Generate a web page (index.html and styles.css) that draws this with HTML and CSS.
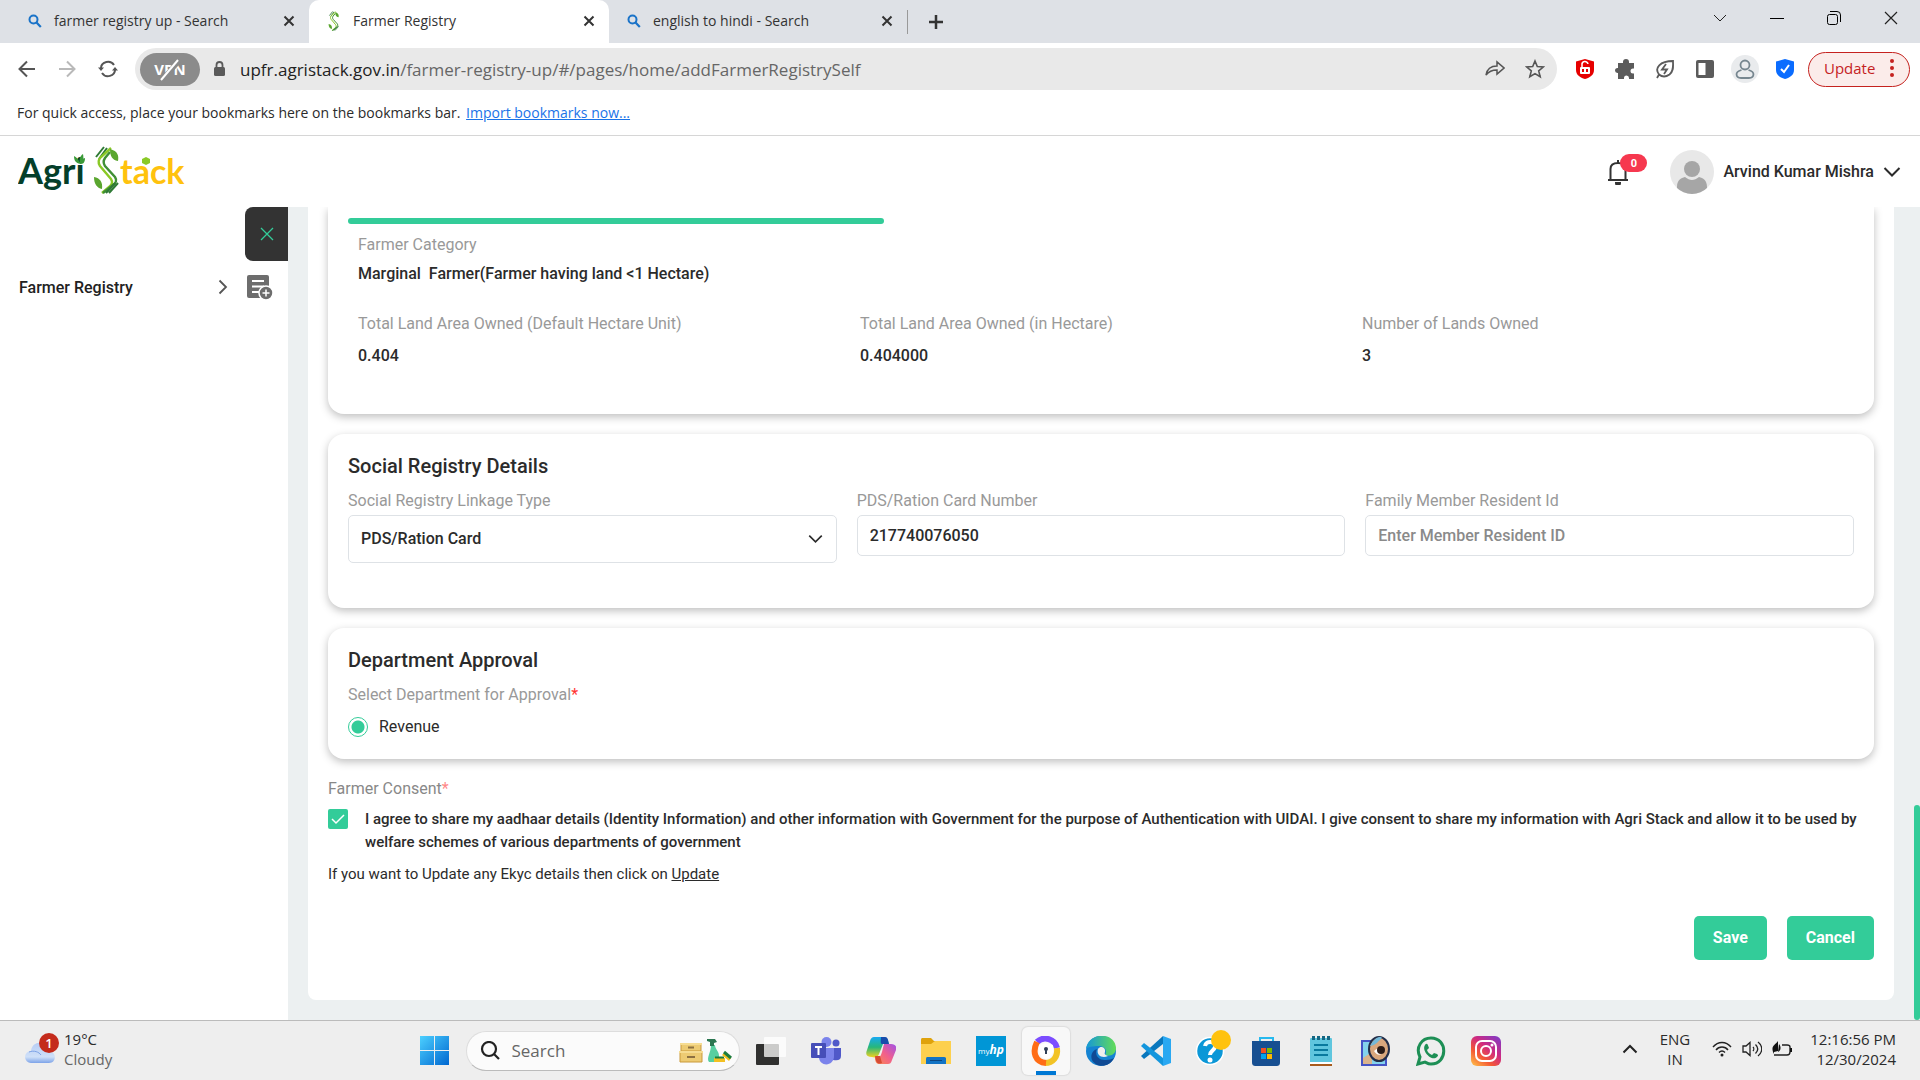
FILE: index.html
```html
<!DOCTYPE html>
<html lang="en">
<head>
<meta charset="utf-8">
<title>Farmer Registry</title>
<link rel="stylesheet" href="styles.css">
</head>
<body>
<svg class="defs" aria-hidden="true">
  <symbol id="search" viewBox="0 0 14 14"><circle cx="5.5" cy="5.5" r="4" fill="none" stroke="currentColor" stroke-width="2"/><path d="M8.5 8.5L12.8 13" stroke="currentColor" stroke-width="2.2"/></symbol>
  <symbol id="x" viewBox="0 0 12 12"><path d="M1.5 1.5l9 9M10.500 1.500l-9 9" stroke="currentColor" stroke-width="2" fill="none"/></symbol>
  <symbol id="chevron" viewBox="0 0 18 12"><path d="M1.500 2L9 9.500L16.500 2" stroke="currentColor" stroke-width="2" fill="none"/></symbol>
  <symbol id="stalk" viewBox="0 0 26 48">
    <path d="M2 11L10 1M5 13L13 2" stroke="#2f7a35" stroke-width="2" fill="none"/>
    <path d="M17 2L7 11C4 14 4 17 6 20L17 33C19 36 18 39 15 41L8 47" stroke="#8ac926" stroke-width="2.400" fill="none"/>
    <path d="M16 6L11 12C9 15 9 17 11 20L21 31C23 34 22 37 19 39L9 47" stroke="#3f8f35" stroke-width="2.400" fill="none"/>
    <path d="M16 3C24 5 25 10 24 15C18 14 16 10 16 3zM0 31C6 32 9 36 8 43C3 42 0 38 0 31z" fill="#5aa62f"/>
    <path d="M12 47L21 37M15 47L24 37" stroke="#2f7a35" stroke-width="2" fill="none"/>
  </symbol>
</svg>
<div class="screen">
  <div class="tabs">
    <div class="tab"><svg class="tab-icon blue"><use href="#search"/></svg><span class="tab-title">farmer registry up - Search</span><button class="bare" aria-label="Close tab"><svg class="s12"><use href="#x"/></svg></button></div>
    <div class="tab active"><svg class="tab-icon tall"><use href="#stalk"/></svg><span class="tab-title">Farmer Registry</span><button class="bare" aria-label="Close tab"><svg class="s12"><use href="#x"/></svg></button></div>
    <div class="tab"><svg class="tab-icon blue"><use href="#search"/></svg><span class="tab-title">english to hindi - Search</span><button class="bare" aria-label="Close tab"><svg class="s12"><use href="#x"/></svg></button></div>
    <button class="bare new-tab" aria-label="New tab"><svg width="16" height="16"><path d="M8 1v14M1 8h14" stroke="#333" stroke-width="2.500"/></svg></button>
    <div class="window-buttons">
      <button class="bare" aria-label="Search tabs"><svg width="14" height="14"><path d="M1 4l6 6 6-6" stroke="#222" fill="none"/></svg></button>
      <button class="bare" aria-label="Minimize"><svg width="14" height="14"><path d="M0 7.500h14" stroke="#000"/></svg></button>
      <button class="bare" aria-label="Restore"><svg width="14" height="14" fill="none" stroke="#000"><rect x=".5" y="3.500" width="10" height="10" rx="2"/><path d="M3 .5h7a3.500 3.500 0 0 1 3.500 3.500v7"/></svg></button>
      <button class="bare" aria-label="Close"><svg width="14" height="14"><path d="M1 1l12 12M13 1L1 13" stroke="#222" stroke-width="1.200"/></svg></button>
    </div>
  </div>
  <div class="toolbar">
    <button class="bare" aria-label="Back"><svg width="18" height="18" fill="none" stroke="#555" stroke-width="2"><path d="M17 9H2M9 1.500L1.500 9 9 16.500"/></svg></button>
    <button class="bare" aria-label="Forward"><svg width="18" height="18" fill="none" stroke="#b9b9b9" stroke-width="2"><path d="M1 9h15M9 1.500L16.500 9 9 16.500"/></svg></button>
    <button class="bare" aria-label="Reload"><svg width="20" height="18" fill="none" stroke="#555" stroke-width="2"><path d="M3 8a7 6.500 0 0 1 13-3M17 9.500a7 6.500 0 0 1-13 3.500"/><path d="M0 7.500h6L3 11zM14 10.500h6L17 7z" fill="#555" stroke="none"/></svg></button>
    <div class="omnibox">
      <button class="vpn">VPN<svg class="slash" viewBox="0 0 24 24"><path d="M4 22L21 3" stroke="#8b8b8b" stroke-width="5"/><path d="M3 22L20 2" stroke="#fff" stroke-width="2"/></svg></button>
      <svg width="12" height="16"><rect y="6" width="11" height="9" rx="1.500" fill="#5a5a5a"/><path d="M2.500 7V4a3 3 0 0 1 6 0v3" fill="none" stroke="#5a5a5a" stroke-width="1.800"/></svg>
      <span class="url"><span class="host">upfr.agristack.gov.in</span>/farmer-registry-up/#/pages/home/addFarmerRegistrySelf</span>
      <button class="bare" aria-label="Share"><svg width="20" height="18" fill="none" stroke="#555" stroke-width="1.500"><path d="M12 6V2l7 6-7 6v-4C7 10 4 11 1 15 2 9 6 6 12 6z"/></svg></button>
      <button class="bare" aria-label="Bookmark"><svg width="20" height="20" fill="none" stroke="#555" stroke-width="1.600"><path d="M10 2l2.300 5.600 6 .4-4.600 3.900 1.500 5.900L10 14.600l-5.200 3.200 1.500-5.900L1.700 8l6-.4z"/></svg></button>
    </div>
    <div class="extensions">
      <button class="bare" aria-label="Ad blocker"><svg width="20" height="20"><path d="M1 2.500L10 0l9 2.500V11c0 5-4 7.500-9 9-5-1.500-9-4-9-9z" fill="#e60000"/><rect x="5" y="8" width="10" height="7" rx="1" fill="#fff"/><path d="M7 8V6a3 3 0 0 1 6-1" stroke="#fff" stroke-width="1.500" fill="none"/><path d="M7 10h2v3H7zM11 10h2v3h-2z" fill="#e60000"/></svg></button>
      <button class="bare" aria-label="Extensions"><svg width="20" height="20"><path d="M3 4h5V3a2.800 2.800 0 0 1 6 0v1h5v5.500h-1a2.500 2.500 0 0 0 0 5h1V20h-5v-1a2.500 2.500 0 0 0-5 0v1H3v-6H2.500a2.500 2.500 0 0 1 0-5H3z" fill="#5b5b5b"/></svg></button>
      <button class="bare" aria-label="Performance"><svg width="20" height="20" fill="none" stroke="#5b5b5b" stroke-width="1.800"><path d="M2 19l2-3.500C-1 9 5 2 18 2c0 5 1 10-3.500 13.500C11 18 7 18 4 15.500"/><path d="M11 5L7 10.500h5L9 15"/></svg></button>
      <button class="bare" aria-label="Side panel"><svg width="20" height="20"><rect x="1" y="1" width="18" height="18" rx="2" fill="#5b5b5b"/><path d="M3.500 4h7v12h-7z" fill="#fff"/></svg></button>
      <button class="bare profile" aria-label="Profile"><svg width="20" height="20" fill="none" stroke="#76868f" stroke-width="1.800"><circle cx="10" cy="6" r="4.500"/><path d="M6.500 11C-1 13 1 19 6 19h8c5 0 7-6-.5-8"/></svg></button>
      <button class="bare" aria-label="Privacy shield"><svg width="20" height="20"><path d="M1 2.500L10 0l9 2.500V11c0 5-4 7.500-9 9-5-1.500-9-4-9-9z" fill="#0a6cff"/><path d="M6 10l3 3 5-7" stroke="#fff" stroke-width="2" fill="none"/></svg></button>
    </div>
    <button class="browser-update">Update<svg width="4" height="18" fill="#c5221f"><circle cx="2" cy="2" r="2"/><circle cx="2" cy="9" r="2"/><circle cx="2" cy="16" r="2"/></svg></button>
  </div>
  <div class="bookmarks">For quick access, place your bookmarks here on the bookmarks bar. <a href="#">Import bookmarks now...</a></div>

  <header class="app-header">
    <svg class="logo" width="168" height="50" role="img" aria-label="Agri Stack">
      <text class="logo-agri" x="0" y="39">Agri</text>
      <path d="M62 19C61 14 58 12 56 11c0 5 2 7 6 8zM62 19c-1-5 0-8 3-10 1 5 0 8-3 10zM62 19c1-4 3-6 5-6 0 5-2 6-5 6z" fill="#3a9a38"/>
      <svg x="76" y="1" width="26" height="48"><use href="#stalk"/></svg>
      <text class="logo-stack" x="102" y="39">tack</text>
      <path d="M124 14l4-2 4 2v4l-4 2-4-2z" fill="#8ac926"/>
    </svg>
    <button class="bare bell" aria-label="Notifications"><svg width="22" height="26" fill="none" stroke="#333" stroke-width="2"><path d="M1 21h20M3.500 21V10c0-4 3-6 7.500-6s7.500 2 7.500 6v11M11 1v3"/><path d="M8 23h6v1a3 3 0 0 1-6 0z" fill="#333" stroke="none"/></svg><span class="badge">0</span></button>
    <button class="bare user"><svg width="44" height="44"><clipPath id="round"><circle cx="22" cy="22" r="22"/></clipPath><g clip-path="url(#round)"><path d="M0 0h44v44H0z" fill="#e8e8e8"/><circle cx="22" cy="19" r="8" fill="#a6a6a6"/><path d="M7 44V37c0-7 4-9 8-10 5 4 9 4 14 0 4 1 8 3 8 10v7z" fill="#a6a6a6"/></g></svg><span>Arvind Kumar Mishra</span><svg width="18" height="12"><use href="#chevron"/></svg></button>
  </header>

  <div class="app">
    <nav class="sidebar">
      <button class="collapse" aria-label="Close menu"><svg width="14" height="14"><path d="M1 1l12 12M13 1L1 13" stroke="#3c9" stroke-width="1.300"/></svg></button>
      <a class="nav-item" href="#"><span>Farmer Registry</span><svg width="10" height="16"><path d="M1.500 1.500L8 8l-6.500 6.500" fill="none" stroke="#555" stroke-width="1.800"/></svg><svg width="26" height="26"><rect x="0" y="1" width="22" height="23" rx="2" fill="#6d6d6d"/><path d="M5 7h12M5 12.500h12M5 18h7" stroke="#fff" stroke-width="2"/><circle cx="19" cy="19" r="7" fill="#6d6d6d" stroke="#fff" stroke-width="1.500"/><path d="M19 15.500v7M15.500 19h7" stroke="#fff" stroke-width="1.500"/></svg></a>
    </nav>
    <main class="content">
      <form class="panel">
        <section class="card lands">
          <div class="progress"></div>
          <dl class="facts">
            <div class="fact wide"><dt>Farmer Category</dt><dd class="category">Marginal&nbsp; Farmer(Farmer having land &lt;1 Hectare)</dd></div>
            <div class="fact"><dt>Total Land Area Owned (Default Hectare Unit)</dt><dd>0.404</dd></div>
            <div class="fact"><dt>Total Land Area Owned (in Hectare)</dt><dd>0.404000</dd></div>
            <div class="fact"><dt>Number of Lands Owned</dt><dd>3</dd></div>
          </dl>
        </section>
        <section class="card">
          <h2>Social Registry Details</h2>
          <div class="fields">
            <div class="field"><label for="linkage">Social Registry Linkage Type</label><div class="select-box"><select id="linkage"><option>PDS/Ration Card</option></select><svg class="select-arrow" viewBox="0 0 18 12"><use href="#chevron"/></svg></div></div>
            <div class="field"><label for="ration">PDS/Ration Card Number</label><input id="ration" type="text" value="217740076050"></div>
            <div class="field"><label for="member">Family Member Resident Id</label><input id="member" type="text" placeholder="Enter Member Resident ID"></div>
          </div>
        </section>
        <section class="card approval">
          <h2>Department Approval</h2>
          <p class="label">Select Department for Approval<span class="required">*</span></p>
          <label class="radio"><input type="radio" name="dept" checked>Revenue</label>
        </section>
        <section class="consent">
          <p class="consent-title">Farmer Consent<span class="required">*</span></p>
          <label class="agree"><span class="check"><input type="checkbox" checked><svg class="tick" viewBox="0 0 20 20"><path d="M4 10l4 4 8-8" fill="none" stroke="#fff" stroke-width="1.500"/></svg></span><span>I agree to share my aadhaar details (Identity Information) and other information with Government for the purpose of Authentication with UIDAI. I give consent to share my information with Agri Stack and allow it to be used by welfare schemes of various departments of government</span></label>
          <p class="ekyc">If you want to Update any Ekyc details then click on <a href="#">Update</a></p>
        </section>
        <div class="actions"><button type="button">Save</button><button type="button">Cancel</button></div>
      </form>
      <div class="scroll-thumb"></div>
    </main>
  </div>

  <footer class="taskbar">
    <button class="bare weather"><svg width="34" height="34"><defs><linearGradient id="cl" x2="0" y2="1"><stop stop-color="#b7cdf5"/><stop offset=".7" stop-color="#cfe0f8"/><stop offset="1" stop-color="#7da3e8"/></linearGradient></defs><path d="M6 31a6 6 0 0 1 0-12C7 8 22 8 23 19c9 0 9 12 1 12z" fill="url(#cl)"/><path d="M4 20c5-2 10 0 12 3" stroke="#7ea3e6" fill="none"/><circle cx="24" cy="11" r="10" fill="#c42b1c"/><text class="count" x="24" y="16">1</text></svg><span class="weather-text"><span>19°C</span><span class="muted">Cloudy</span></span></button>
    <div class="dock">
      <button class="app-button" aria-label="Start"><svg width="30" height="30"><defs><linearGradient id="win" x2="1" y2="1"><stop stop-color="#4cd0ff"/><stop offset="1" stop-color="#0067d0"/></linearGradient></defs><path d="M0 0h14v14H0zM15 0h14v14H15zM0 15h14v14H0zM15 15h14v14H15z" fill="url(#win)"/></svg></button>
      <label class="search-box"><svg width="20" height="20" fill="none" stroke="#222" stroke-width="2.200"><circle cx="9" cy="8" r="7"/><path d="M14 13l5 5"/></svg><input type="search" placeholder="Search" aria-label="Search"><svg width="54" height="26"><g fill="#edcb73" stroke="#c9993b"><path d="M3 6h20v7H3zM2 14h22v10H2z"/></g><path d="M2 6h22M1 14h24" stroke="#f6dc91" stroke-width="2"/><path d="M10 9.500h6M9 19h8" stroke="#8c7041" stroke-width="2"/><path d="M33 7h4c0 4 4 6 4 11 0 3 0 6-2 6h-8c-3-4 2-9 2-17z" fill="#58cfa0"/><path d="M29 1h8l2 3-3 1v3h-4V4l-3-1z" fill="#2b7650"/><path d="M36 20h11v4H36z" fill="#f3c021"/><path d="M37 19.500h9" stroke="#1d7c3d" stroke-width="2"/><path d="M44 17l3-3 6 6-2 3z" fill="#f1c01d"/><path d="M46 14l7 6" stroke="#1d7c3d" stroke-width="3"/></svg></label>
      <button class="app-button" aria-label="Task view"><svg width="30" height="30"><rect x="0" y="8" width="23" height="21" rx="1" fill="#30302f"/><rect x="8" y="1" width="22" height="20" rx="1" fill="#fff" fill-opacity=".75"/></svg></button>
      <button class="app-button" aria-label="Teams"><svg width="30" height="30"><circle cx="15.500" cy="6" r="5" fill="#7b83eb"/><circle cx="25" cy="7" r="3.500" fill="#5059c9"/><path d="M22 12h8v8c0 4-3 5-8 4z" fill="#5059c9"/><path d="M8 12h15v8c0 11-15 11-15 1z" fill="#7b83eb"/><rect y="7" width="15" height="15" rx="1" fill="#464eb8"/><path d="M4 11h7M7.500 11v8" stroke="#fff" stroke-width="2"/></svg></button>
      <button class="app-button" aria-label="Copilot"><svg width="30" height="30"><defs><linearGradient id="c1" x2="0" y2="1"><stop stop-color="#17a9f2"/><stop offset=".5" stop-color="#27b77a"/><stop offset="1" stop-color="#f4d21e"/></linearGradient><linearGradient id="c2" x1="1" x2="0" y2="1"><stop stop-color="#a052e8"/><stop offset=".5" stop-color="#f15f8c"/><stop offset="1" stop-color="#fb8c4b"/></linearGradient></defs><path d="M8 1h10c3 0 4 3 5 7h-6l-4 10c-1 3-4 4-7 3-5 0-7-2-5-7l3-9c1-3 2-4 4-4z" fill="url(#c1)"/><path d="M15 1h4c3 0 3 3 4 7h-7c-2 0-1-5-1-7z" fill="#174cab"/><path d="M18 8h7c4 0 6 2 5 6l-4 10c-1 3-2 4-4 4H13c-3 0-4-3-4-7h4c2 0 3-5 5-13z" fill="url(#c2)"/><path d="M9 20h5l2 7c-5 2-6-1-7-7z" fill="#d64b35"/></svg></button>
      <button class="app-button" aria-label="File Explorer"><svg width="30" height="30"><path d="M0 4c0-2 1-2 2-2h8l3 3h16c1 0 1 1 1 2v21H0z" fill="#dfa20c"/><path d="M0 8h10l4-3h16v23H0z" fill="#fdd04e"/><path d="M5 28v-5c0-2 1-2 2-2h16c2 0 2 1 2 2v5z" fill="#1273c4"/><path d="M9 24.500h12" stroke="#0b4580"/></svg></button>
      <button class="app-button" aria-label="myHP"><svg width="30" height="30"><rect width="30" height="30" fill="#0096d6"/><text class="myhp" x="2" y="18">my<tspan class="hp">hp</tspan></text></svg></button>
      <button class="app-button current" aria-label="Secure browser"><svg width="30" height="30" fill="none" stroke-width="6"><path d="M6 6a12 12 0 0 1 20 6" stroke="#7c4dff"/><path d="M26 12c1 9-4 15-12 15" stroke="#f2c326"/><path d="M15 27C4 26 1 16 6 6" stroke="#ff6d16"/><path d="M8 9l7-2 7 2v5c0 5-3 8-7 9-4-1-7-4-7-9z" fill="#fff" stroke="none"/><circle cx="15" cy="13" r="2" fill="#314158" stroke="none"/><path d="M15 13v5" stroke="#314158" stroke-width="2"/></svg></button>
      <button class="app-button" aria-label="Edge"><svg width="30" height="30"><defs><linearGradient id="e1"><stop stop-color="#1597d8"/><stop offset="1" stop-color="#63dd57"/></linearGradient></defs><circle cx="15" cy="15" r="15" fill="#1583d2"/><path d="M0 13C2-4 29-5 30 12c0 7-7 9-11 7 3-5-1-9-6-9-6 0-12 1-13 3z" fill="url(#e1)"/><path d="M11 13c-3 6 2 12 9 11 3 0 6-1 8-2-4 9-17 11-22 2-2-5 1-10 5-11z" fill="#104a94"/><path d="M12 13c3-4 8-1 7 3-1 2 0 3 3 4-6 3-12-1-10-7z" fill="#eee"/></svg></button>
      <button class="app-button" aria-label="Visual Studio Code"><svg width="30" height="30"><path d="M22 0l8 3v24l-8 3z" fill="#29a8f2"/><path d="M22 8L3 23l-3-3L22 0z" fill="#0877bd"/><path d="M22 22L3 7l-3 3 22 20z" fill="#1496dd"/></svg></button>
      <button class="app-button" aria-label="Help"><svg class="overflow" width="30" height="30"><circle cx="14" cy="15" r="13.500" fill="#0b97d7" stroke="#fff" stroke-width="1.500"/><path d="M9 10c1-6 11-5 10 1-1 4-5 4-5 8" fill="none" stroke="#fff" stroke-width="4"/><circle cx="14" cy="24" r="2.500" fill="#fff"/><circle cx="25" cy="4" r="10" fill="#ffc20e"/></svg></button>
      <button class="app-button" aria-label="Store"><svg width="30" height="30"><path d="M9 7V2h13v5" fill="none" stroke="#27b9ee" stroke-width="2"/><path d="M1 5h28v21c0 3-1 4-4 4H5c-3 0-4-1-4-4z" fill="#174f91"/><path d="M10 12h5v5h-5z" fill="#f25022"/><path d="M16 12h5v5h-5z" fill="#7fba00"/><path d="M10 18h5v5h-5z" fill="#00a4ef"/><path d="M16 18h5v5h-5z" fill="#ffb900"/></svg></button>
      <button class="app-button" aria-label="Notepad"><svg width="30" height="30"><rect x="4" y="2" width="22" height="26" rx="1" fill="#5fc6de"/><path d="M4 26h22v2H4z" fill="#fff"/><path d="M4 29h22" stroke="#a85b1d" stroke-width="2"/><path d="M8 9h14M8 14h14M8 19h14" stroke="#087a9e" stroke-width="2"/><path d="M7.500 0v4M12.500 0v4M17.500 0v4M22.500 0v4" stroke="#146783" stroke-width="3"/></svg></button>
      <button class="app-button" aria-label="Image viewer"><svg width="30" height="30"><rect x="1" y="5" width="24" height="24" fill="#83d2ed" stroke="#4454c5" stroke-width="2"/><path d="M2 22l9-6v12H2z" fill="#d9b38c"/><ellipse cx="18" cy="13" rx="10" ry="12" fill="#d9a77d" stroke="#222d48" stroke-width="2"/><path d="M9 10C14 0 20 0 21 2c-4 3-5 7-12 8z" fill="#74b8d8"/><path d="M13 15c5-4 7-4 11-1-3 6-8 6-11 1z" fill="#fff"/><circle cx="20" cy="14" r="4" fill="#2b1c18"/></svg></button>
      <button class="app-button" aria-label="WhatsApp"><svg width="30" height="30"><path d="M2 28l2-7C-1 11 6 2 15 2c17 0 17 26 0 26-3 0-4-1-6-2z" fill="none" stroke="#1d8f55" stroke-width="3"/><path d="M9 9c2-3 3 0 4 3l-2 2c1 3 3 4 5 5l2-2c4 1 5 2 3 4-5 5-16-6-12-12z" fill="#1d8f55"/></svg></button>
      <button class="app-button" aria-label="Instagram"><svg width="30" height="30"><defs><linearGradient id="ig" x1="0" y1="1" x2=".8" y2="0"><stop stop-color="#ffc64a"/><stop offset=".35" stop-color="#f45a34"/><stop offset=".65" stop-color="#cf2a80"/><stop offset="1" stop-color="#8a38bd"/></linearGradient></defs><rect width="30" height="30" rx="6" fill="url(#ig)"/><g fill="none" stroke="#fff" stroke-width="2"><rect x="5" y="5" width="20" height="20" rx="6"/><circle cx="15" cy="15" r="5"/></g><circle cx="21" cy="9" r="1.500" fill="#fff"/></svg></button>
    </div>
    <div class="tray">
      <button class="bare" aria-label="Hidden icons"><svg width="16" height="10"><path d="M1.500 8.500L8 2l6.500 6.500" fill="none" stroke="#222" stroke-width="2"/></svg></button>
      <span class="language">ENG<br>IN</span>
      <button class="bare status" aria-label="Network, volume, battery">
        <svg width="20" height="16" fill="none" stroke="#222" stroke-width="1.400"><path d="M1 6c5-6 13-6 18 0M4 9c3-4 9-4 12 0M7 11.500c2-2 4-2 6 0"/><circle cx="10" cy="14" r="1.500" fill="#222" stroke="none"/></svg>
        <svg width="20" height="16" fill="none" stroke="#222" stroke-width="1.300"><path d="M1 5h3l4-3.500v13L4 11H1zM11 6c1 1 1 3 0 4M13.500 3.500c3 3 3 6 0 9M16 1c5 4 5 10 0 14"/></svg>
        <svg width="20" height="16"><path d="M10 4h5c2 0 3 1 3 2v5c0 2-1 3-3 3H2" fill="none" stroke="#222" stroke-width="1.400"/><path d="M1 11C-1 5 3 4 6 0v10l-4 1-1 2zM7 3c3 4 1 7-1 8z" fill="#111"/><path d="M18 7h2v4h-2z" fill="#111"/></svg>
      </button>
      <time class="clock">12:16:56 PM<br>12/30/2024</time>
    </div>
  </footer>
</div>
</body>
</html>
```
FILE: styles.css
```css
* { box-sizing: border-box; }
body { margin: 0; background: #fff; color: #2b2b2b; font-family: Roboto, sans-serif; font-size: 16px; }
p, h2, dl, dd { margin: 0; }
svg { display: block; flex: none; }
button, input, select { font: inherit; color: inherit; }
.defs { position: absolute; width: 0; height: 0; }
.bare { display: flex; align-items: center; justify-content: center; padding: 0; border: 0; background: none; }
.s12 { width: 12px; height: 12px; }

.screen { display: flex; flex-direction: column; height: 100vh; overflow: hidden; }

/* Browser chrome */
.tabs, .toolbar, .bookmarks, .taskbar { font-family: "Open Sans", sans-serif; flex: none; }
.tabs { display: flex; align-items: center; height: 43px; background: #dee1e6; color: #333; font-size: 14px; }
.tab { display: flex; align-items: center; width: 298px; height: 43px; padding: 0 14px 2px 18px; }
.tab:first-child { width: 309px; padding-left: 28px; }
.tab.active { width: 300px; border-radius: 10px 10px 0 0; background: #fff; }
.tab-icon { width: 14px; height: 14px; margin-right: 12px; }
.tab-icon.tall { height: 20px; }
.blue { color: #1a73c8; }
.tab-title { flex: 1; }
.new-tab { padding: 0 20px; height: 24px; border-left: 1px solid #999; }
.window-buttons { display: flex; gap: 43px; margin: 0 22px 7px auto; }
.toolbar { display: flex; align-items: center; height: 52px; padding: 0 10px 0 18px; gap: 22px; }
.omnibox { display: flex; align-items: center; flex: 1; height: 42px; margin-left: -5px; padding: 0 12px 0 5px; gap: 20px; border-radius: 21px; background: #e9e9e9; }
.vpn { position: relative; width: 60px; height: 33px; margin-right: -6px; padding: 0; border: 0; border-radius: 17px; background: #8b8b8b; color: #fff; font-size: 15px; font-weight: 700; }
.slash { position: absolute; left: 18px; top: 5px; width: 24px; height: 24px; }
.url { flex: 1; margin-left: -6px; color: #666; font-size: 17px; white-space: nowrap; }
.host { color: #222; }
.extensions { display: flex; align-items: center; gap: 20px; margin-left: -4px; }
.profile { width: 28px; height: 28px; margin: 0 -4px; border-radius: 50%; background: #e9ebed; }
.browser-update { display: flex; align-items: center; justify-content: space-between; width: 102px; height: 35px; margin-left: -9px; padding: 0 15px 2px; border: 1px solid #c5221f; border-radius: 18px; background: #fbecea; color: #c5221f; font-size: 15px; }
.bookmarks { height: 41px; padding: 0 17px; border-bottom: 1px solid #d6d6d6; font-size: 14px; line-height: 36px; }
.bookmarks a { margin-left: 2px; color: #1a73e8; }

/* Application header */
.app-header { display: flex; align-items: center; flex: none; height: 71px; padding: 0 19px 0 18px; }
.logo { margin: 0 auto 4px 0; }
.logo-agri, .logo-stack { font: 700 36px Lato, sans-serif; fill: #043f2a; }
.logo-stack { font-size: 34px; fill: #ffc20e; }
.bell { position: relative; margin-right: 41px; }
.badge { position: absolute; left: 13px; top: -5px; width: 27px; height: 18px; border-radius: 9px; background: #f6384f; color: #fff; font-size: 11px; font-weight: 700; line-height: 19px; }
.user { gap: 9px; font-weight: 500; }

/* Application body */
.app { display: flex; flex: 1; min-height: 0; }
.sidebar { display: flex; flex-direction: column; flex: none; width: 288px; }
.collapse { display: flex; align-items: center; justify-content: center; align-self: flex-end; width: 43px; height: 54px; padding: 0; border: 0; border-radius: 8px 0 0 8px; background: #333; }
.nav-item { display: flex; align-items: center; gap: 19px; padding: 13px 15px 13px 19px; color: #222; font-weight: 500; text-decoration: none; }
.nav-item span { flex: 1; }
.content { position: relative; flex: 1; padding: 0 26px 20px 20px; background: #ecf0f1; }
.panel { display: flex; flex-direction: column; gap: 20px; height: 100%; padding: 0 20px 40px; border-radius: 0 0 8px 8px; background: #fff; overflow: hidden; }
.card { padding: 20px 20px 44px; border-radius: 16px; box-shadow: 0 3px 8px rgba(0, 0, 0, .25); }
.lands { padding: 11px 10px 46px 20px; border-radius: 0 0 16px 16px; }
.progress { width: 536px; height: 6px; border-radius: 3px; background: #3c9; }
.facts { display: grid; grid-template-columns: repeat(3, 1fr); row-gap: 26px; padding: 9px 0 0 10px; }
.fact { line-height: 24px; }
.wide { grid-column: 1 / -1; }
dt, .label, .field label { color: #999; }
dd { margin-top: 8px; font-weight: 500; }
.category { margin-top: 5px; }
h2 { font-size: 20px; font-weight: 500; line-height: 24px; }
.fields { display: grid; grid-template-columns: repeat(3, 1fr); align-items: start; gap: 20px; padding-top: 11px; }
.field { display: flex; flex-direction: column; line-height: 24px; gap: 2px; }
.field input, .field select { width: 100%; height: 41px; padding: 0 12px; border: 1px solid #dee2e6; border-radius: 5px; background: #fff; font-weight: 500; }
.field select { display: block; height: 48px; appearance: none; }
.field ::placeholder { color: #8a8a8a; opacity: 1; }
.select-box { position: relative; }
.select-arrow { position: absolute; right: 14px; top: 19px; width: 15px; height: 10px; pointer-events: none; }
.fields { padding-bottom: 1px; }
.approval { padding-bottom: 20px; }
.label { padding-top: 11px; line-height: 24px; }
.required { color: #f33; }
.radio { display: flex; align-items: center; gap: 11px; padding-top: 8px; line-height: 24px; }
.radio input { appearance: none; width: 20px; height: 20px; margin: 0; border: 1px solid #3c9; border-radius: 50%; background: radial-gradient(circle, #3c9 6px, #fff 7px); }
.consent { font-size: 15px; }
.consent-title { color: #888; font-size: 16px; line-height: 20px; }
.consent-title .required { color: #f88; }
.agree { display: flex; gap: 17px; padding-top: 9px; line-height: 23px; font-weight: 500; }
.check { position: relative; flex: none; width: 20px; height: 20px; margin-top: 1px; }
.check input { display: block; appearance: none; width: 20px; height: 20px; margin: 0; border-radius: 2px; background: #3c9; }
.tick { position: absolute; left: 0; top: 0; width: 20px; height: 20px; }
.ekyc { padding-top: 10px; line-height: 20px; }
.ekyc a { color: inherit; }
.actions { display: flex; justify-content: flex-end; gap: 20px; margin-top: auto; }
.actions button { height: 44px; padding: 0 19px 1px; border: 0; border-radius: 5px; background: #3c9; color: #fff; font-weight: 700; }
.scroll-thumb { position: absolute; right: 0; bottom: 0; width: 6px; height: 215px; border-radius: 3px; background: #3c9; }

/* Taskbar */
.taskbar { display: grid; grid-template-columns: 1fr auto 1fr; align-items: center; height: 60px; border-top: 1px solid #bbb; background: #eee; font-size: 15px; line-height: 20px; }
.weather { justify-self: start; gap: 5px; padding: 0 0 4px 25px; text-align: left; }
.weather-text { display: flex; flex-direction: column; }
.muted { color: #666; }
.count { font-size: 13px; font-weight: 600; fill: #fff; text-anchor: middle; }
.dock { display: flex; align-items: center; gap: 7px; }
.app-button { display: flex; align-items: center; justify-content: center; width: 48px; height: 48px; padding: 0; border: 0; border-radius: 6px; background: none; }
.current { background: linear-gradient(#0078d4, #0078d4) center bottom / 20px 4px no-repeat #f8f8f8; box-shadow: 0 0 1px 1px #ddd; }
.overflow { overflow: visible; }
.myhp { font-size: 8px; fill: #fff; }
.hp { font-size: 12px; font-style: italic; font-weight: 700; }
.search-box { display: flex; align-items: center; gap: 12px; width: 274px; height: 40px; padding: 0 7px 0 13px; border: 1px solid #ddd; border-bottom-color: #bbb; border-radius: 20px; background: #fbfbfb; }
.search-box input { flex: 1; min-width: 0; padding: 0; border: 0; outline: 0; background: none; font-size: 17px; }
.search-box ::placeholder { color: #666; opacity: 1; }
.tray { display: flex; align-items: center; justify-self: end; gap: 22px; padding: 0 24px 4px 0; }
.language { text-align: center; }
.status { gap: 10px; margin-right: -4px; }
.clock { text-align: right; }
```
